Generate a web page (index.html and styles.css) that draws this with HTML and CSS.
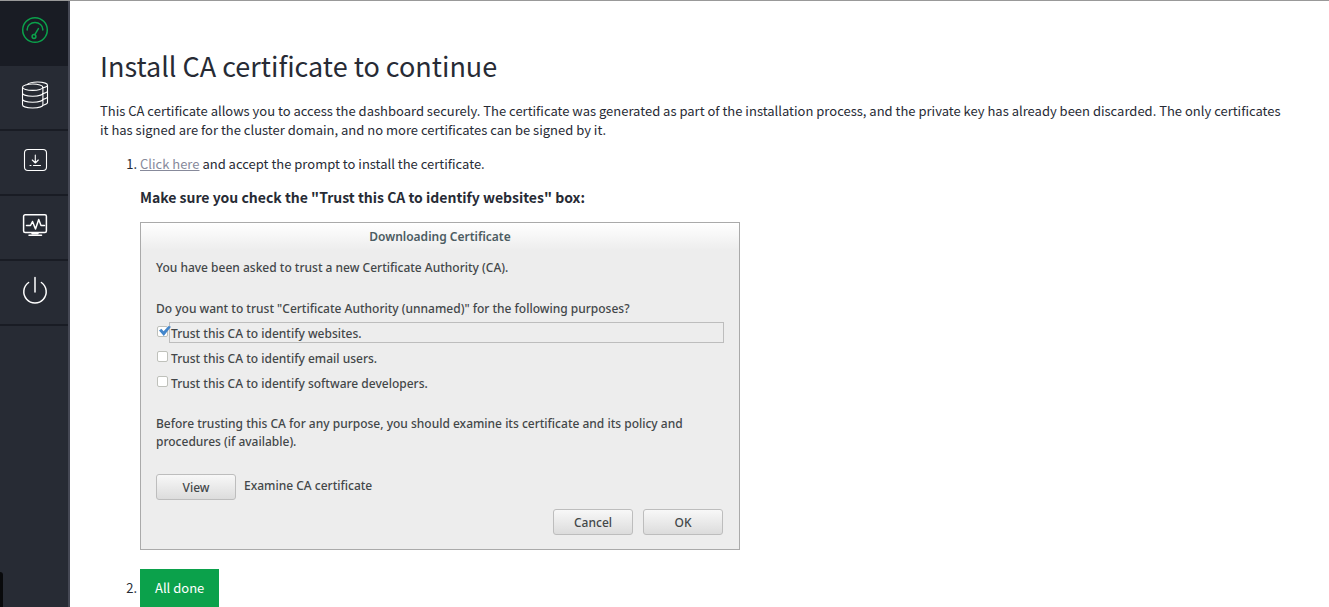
FILE: index.html
```html
<!DOCTYPE html>
<html lang="en">
<head>
<meta charset="utf-8">
<meta name="viewport" content="width=device-width, initial-scale=1">
<title>Install CA certificate</title>
<link rel="stylesheet" href="styles.css">
</head>
<body>
<div class="app">
  <nav class="sidebar" aria-label="Main">
    <a class="nav-item active" href="#dashboard" aria-label="Dashboard">
      <svg class="icon green" viewBox="0 0 28 28">
        <circle cx="14" cy="14" r="12.3"/>
        <path d="M6.2 14v-.8a7.8 6.600 0 0 1 15.600 0v.8"/>
        <circle cx="13" cy="20.5" r="1.9"/>
        <path d="M13.8 18.7L17.4 12.6"/>
      </svg>
    </a>
    <a class="nav-item" href="#storage" aria-label="Storage">
      <svg class="icon thin" viewBox="0 0 28 28">
        <ellipse cx="11.7" cy="6.2" rx="10.2" ry="3.2"/>
        <path d="M1.500 6.200v17.600c0 1.800 4.600 3.200 10.200 3.200s10.200-1.400 10.200-3.200V6.200M1.500 12.100c0 1.800 4.600 3.200 10.200 3.200s10.200-1.400 10.200-3.200M1.500 18c0 1.800 4.600 3.200 10.200 3.200s10.200-1.400 10.200-3.200"/>
        <path d="M6.300 3.400C8 1.900 12 1 16.300 1c5.600 0 10.200 1.400 10.200 3.200v17.400c0 1-1.700 2-4.300 2.600M26.500 4.200c0 1.100-1.700 2-4.500 2.600M26.500 10c0 1-1.700 2-4.500 2.600M26.500 15.800c0 1-1.700 2-4.500 2.600"/>
      </svg>
    </a>
    <a class="nav-item" href="#install" aria-label="Install">
      <svg class="icon thin" viewBox="0 0 28 28">
        <rect x="3.500" y="3.500" width="22" height="21" rx="3.500"/>
        <path d="M14.300 9v8M11.300 14l3 3 3-3M12.500 19.500h7M9 19.500h1"/>
      </svg>
    </a>
    <a class="nav-item" href="#monitor" aria-label="Monitoring">
      <svg class="icon" viewBox="0 0 28 28">
        <rect x="2.600" y="3.800" width="22.800" height="17.700" rx="1.500"/>
        <path d="M5.500 14.500h4l2-4 3 7.500 3.200-9.500 2.300 6h3.500"/>
        <path d="M11 22.500h6M8 24.200h12.500"/>
      </svg>
    </a>
    <a class="nav-item" href="#power" aria-label="Power">
      <svg class="icon" viewBox="0 0 28 28">
        <path d="M14 1.500v14.500M7.600 6.500a11.200 11.200 0 1 0 12.800 0"/>
      </svg>
    </a>
    <div class="edge-tab"></div>
  </nav>
  <main class="content">
    <h1 class="title">Install CA certificate to continue</h1>
    <p class="text intro">This CA certificate allows you to access the dashboard securely. The certificate was generated as part of the installation process, and the private key has already been discarded. The only certificates it has signed are for the cluster domain, and no more certificates can be signed by it.</p>
    <ol class="steps">
      <li>
        <p class="text"><a class="link" href="#certificate">Click here</a> and accept the prompt to install the certificate.</p>
        <p class="text strong">Make sure you check the "Trust this CA to identify websites" box:</p>
        <section class="dialog" aria-labelledby="dialog-title">
          <h2 class="dialog-title" id="dialog-title">Downloading Certificate</h2>
          <div class="dialog-body">
            <p class="line">You have been asked to trust a new Certificate Authority (CA).</p>
            <p class="line question">Do you want to trust "Certificate Authority (unnamed)" for the following purposes?</p>
            <div class="options">
              <div class="option"><input class="check" type="checkbox" id="web" checked><label class="option-label focused" for="web">Trust this CA to identify websites.</label></div>
              <div class="option"><input class="check" type="checkbox" id="mail"><label class="option-label" for="mail">Trust this CA to identify email users.</label></div>
              <div class="option"><input class="check" type="checkbox" id="dev"><label class="option-label" for="dev">Trust this CA to identify software developers.</label></div>
            </div>
            <p class="line">Before trusting this CA for any purpose, you should examine its certificate and its policy and procedures (if available).</p>
            <div class="examine"><button class="button" type="button">View</button><span class="examine-text">Examine CA certificate</span></div>
            <div class="actions"><button class="button" type="button">Cancel</button><button class="button" type="button">OK</button></div>
          </div>
        </section>
      </li>
      <li><button class="done" type="button">All done</button></li>
    </ol>
  </main>
</div>
</body>
</html>
```
FILE: styles.css
```css
* { box-sizing: border-box; }
body {
  margin: 0;
  color: #272b35;
  background: #fff;
  font: 13px/19px "Noto Sans CJK SC", "Noto Sans", sans-serif;
}
.app { display: flex; min-height: 100vh; border-top: 1px solid #999; }
.sidebar {
  position: relative;
  flex: 0 0 70px;
  background: #272b34;
  border-right: 2px solid #454854;
}
.nav-item {
  display: flex;
  align-items: center;
  justify-content: center;
  height: 65px;
  padding: 0 0 5px 2px;
  border-bottom: 2px solid #191c24;
}
.nav-item.active { background: #191c24; }
.icon { width: 28px; height: 28px; fill: none; stroke: #fff; stroke-width: 1.5; stroke-linecap: round; stroke-linejoin: round; }
.icon.thin { stroke-width: 1.1; }
.icon.green { stroke: #0ba14b; }
.edge-tab { position: absolute; left: 0; bottom: 0; width: 3px; height: 35px; background: #090a0c; border-top-right-radius: 3px; }
.content { flex: 1; min-width: 0; padding: 45px 10px 0 30px; }
.title { margin: 0 0 15px; font-size: 27px; line-height: 40px; font-weight: 400; }
.text { margin: 0 0 15px; }
.intro { padding-right: 36px; }
.strong { font-size: 14px; font-weight: 700; }
.link { color: #878a9b; }
.steps { margin: 0; padding-left: 40px; }
.dialog {
  max-width: 600px;
  margin-bottom: 19px;
  color: #434749;
  background: #ededed;
  border: 1px solid #aaa;
  font: 500 12px/18px "Noto Sans", sans-serif;
}
.dialog-title {
  margin: 0;
  font-size: 12px;
  line-height: 27px;
  font-weight: 600;
  text-align: center;
  color: #4c5c62;
  background: linear-gradient(#fff, #ededed);
}
.dialog-body { padding: 9px 15px 14px; }
.line { margin: 0 0 23px; }
.question { margin-bottom: 4px; }
.options { display: grid; gap: 4px; margin-bottom: 22px; }
.option { display: flex; align-items: flex-start; }
.check {
  appearance: none;
  flex: none;
  width: 11px;
  height: 11px;
  margin: 4px 1px;
  border: 1px solid #bfc1bb;
  border-radius: 2px;
  background: #fff;
}
.check:checked { position: relative; }
.check:checked::after {
  content: "";
  position: absolute;
  left: 1px;
  top: -1px;
  width: 12px;
  height: 10px;
  background: #4386cb;
  clip-path: polygon(0 45%, 20% 28%, 38% 52%, 80% 0, 100% 8%, 40% 100%);
}
.option-label { flex: 1; padding: 1px 1px 0; border: 1px solid transparent; line-height: 18px; }
.option-label { padding-top: 2px; line-height: 17px; }
.focused { border-color: #bdbdbd; }
.examine { display: flex; align-items: center; gap: 8px; }
.examine-text { padding-bottom: 2px; }
.button {
  width: 80px;
  height: 26px;
  padding: 2px 0 0;
  color: inherit;
  font: inherit;
  border: 1px solid #bdbdbd;
  border-radius: 3px;
  background: linear-gradient(#f8f8f8, #dcdcdc);
}
.actions { display: flex; justify-content: flex-end; gap: 10px; padding: 9px 1px 0 0; }
.done { padding: 9px 15px 10px; border: 0; color: #fff; background: #0ba14b; font: inherit; }
```
